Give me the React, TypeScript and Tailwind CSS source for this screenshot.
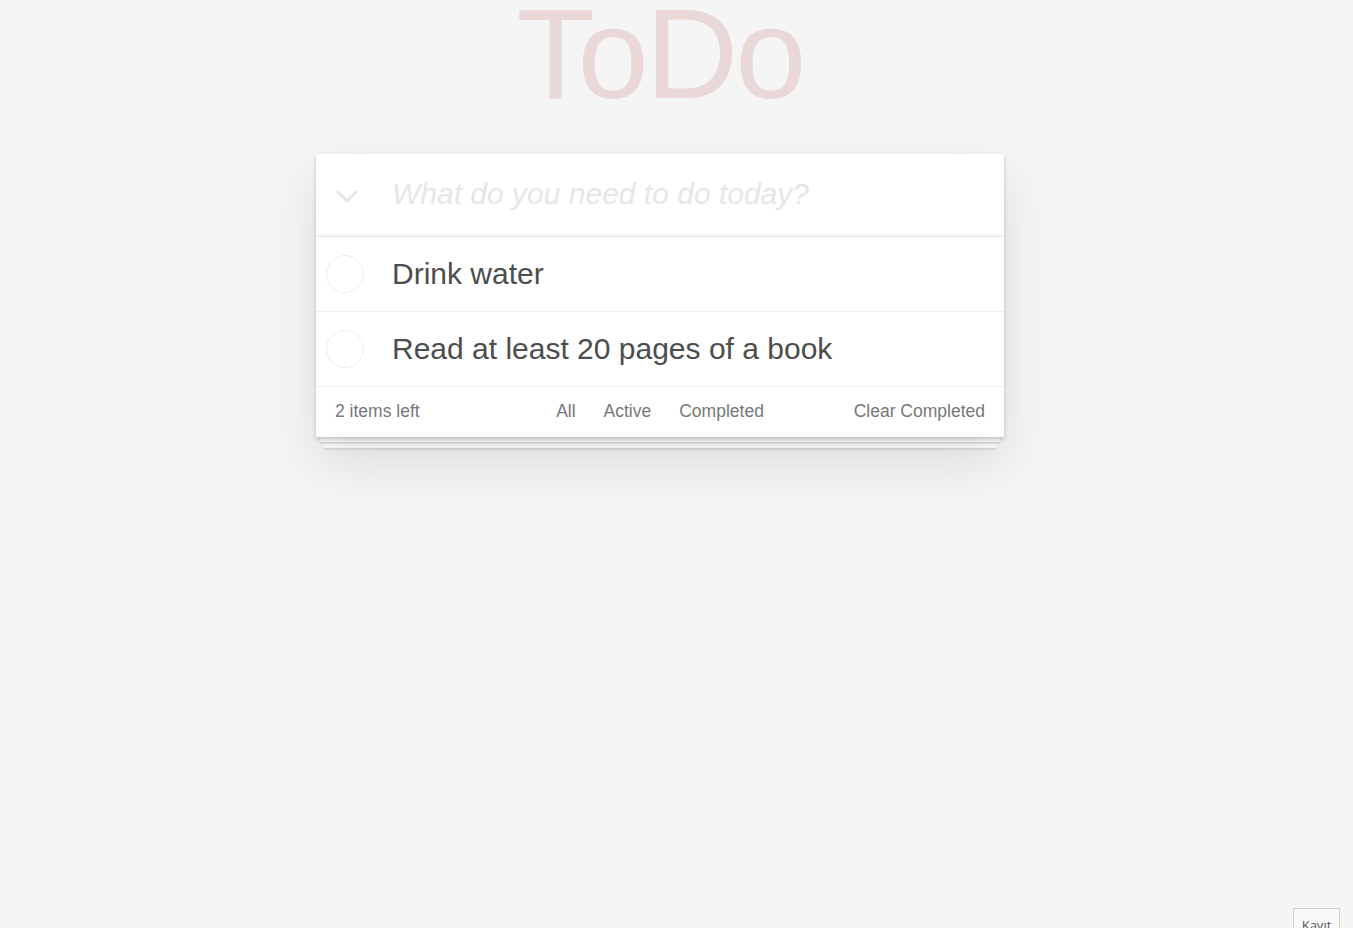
import { useState } from "react";

type Todo = { id: number; title: string; done: boolean };

const initial: Todo[] = [
  { id: 1, title: "Drink water", done: false },
  { id: 2, title: "Read at least 20 pages of a book", done: false },
];

function Chevron() {
  return (
    <svg width="22" height="14" viewBox="0 0 22 14" fill="none">
      <polyline
        points="2,2 11,11 20,2"
        stroke="#e6e6e6"
        strokeWidth="3"
        strokeLinecap="round"
        strokeLinejoin="round"
      />
    </svg>
  );
}

function TodoRow({ todo }: { todo: Todo }) {
  return (
    <li className="flex h-[75px] items-center border-b border-[#ededed]">
      <span className="ml-[10px] h-[38px] w-[38px] shrink-0 rounded-full border border-[#ededed]" />
      <span className="ml-[28px] text-[30px] leading-none text-[#4d4d4d]">
        {todo.title}
      </span>
    </li>
  );
}

export default function App() {
  const [todos] = useState<Todo[]>(initial);
  const left = todos.filter((t) => !t.done).length;

  return (
    <div
      className="min-h-[928px] bg-[#f5f5f5] pr-[33px]"
      style={{ fontFamily: '"Liberation Sans", Arial, sans-serif' }}
    >
      <div className="mx-auto flex w-[688px] flex-col">
        <h1 className="text-center text-[128px] font-normal leading-[107px] tracking-[-3px] text-[#ead7d7]">
          ToDo
        </h1>

        <section className="relative z-10 mt-[47px] bg-white shadow-[0_2px_4px_rgba(0,0,0,0.2),0_25px_50px_rgba(0,0,0,0.1)]">
          <header className="flex h-[83px] items-center border-b border-[#e6e6e6] shadow-[inset_0_-2px_1px_rgba(0,0,0,0.03)]">
            <span className="ml-[20px] mt-[4px] flex w-[22px]">
              <Chevron />
            </span>
            <input
              className="mb-[3px] ml-[34px] flex-1 bg-transparent text-[30px] italic text-[#4d4d4d] outline-none placeholder:text-[#e6e6e6]"
              placeholder="What do you need to do today?"
            />
          </header>

          <ul>
            {todos.map((t) => (
              <TodoRow key={t.id} todo={t} />
            ))}
          </ul>

          <footer className="relative flex h-[50px] items-center justify-between px-[19px] pb-[2px] text-[17.5px] text-[#777]">
            <span>{left} items left</span>
            <nav className="absolute left-1/2 flex -translate-x-1/2 gap-[28px]">
              <span>All</span>
              <span>Active</span>
              <span>Completed</span>
            </nav>
            <span>Clear Completed</span>
          </footer>
        </section>

        <div className="relative z-[5] mx-[4px] h-[6px] border-b border-[#dcdcdc] bg-white shadow-[0_1px_1px_rgba(0,0,0,0.08)]" />
        <div className="relative z-[1] mx-[8px] h-[6px] border-b border-[#dcdcdc] bg-white shadow-[0_1px_1px_rgba(0,0,0,0.08)]" />
      </div>

      <button
        className="fixed right-[13px] top-[908px] flex h-[40px] w-[47px] items-start justify-center border border-[#cfcfcf] bg-[#fafafa] pt-[10px] text-[13px] leading-none text-[#555]"
        style={{ fontFamily: '"Open Sans", sans-serif' }}
      >
        Kayıt
      </button>
    </div>
  );
}
